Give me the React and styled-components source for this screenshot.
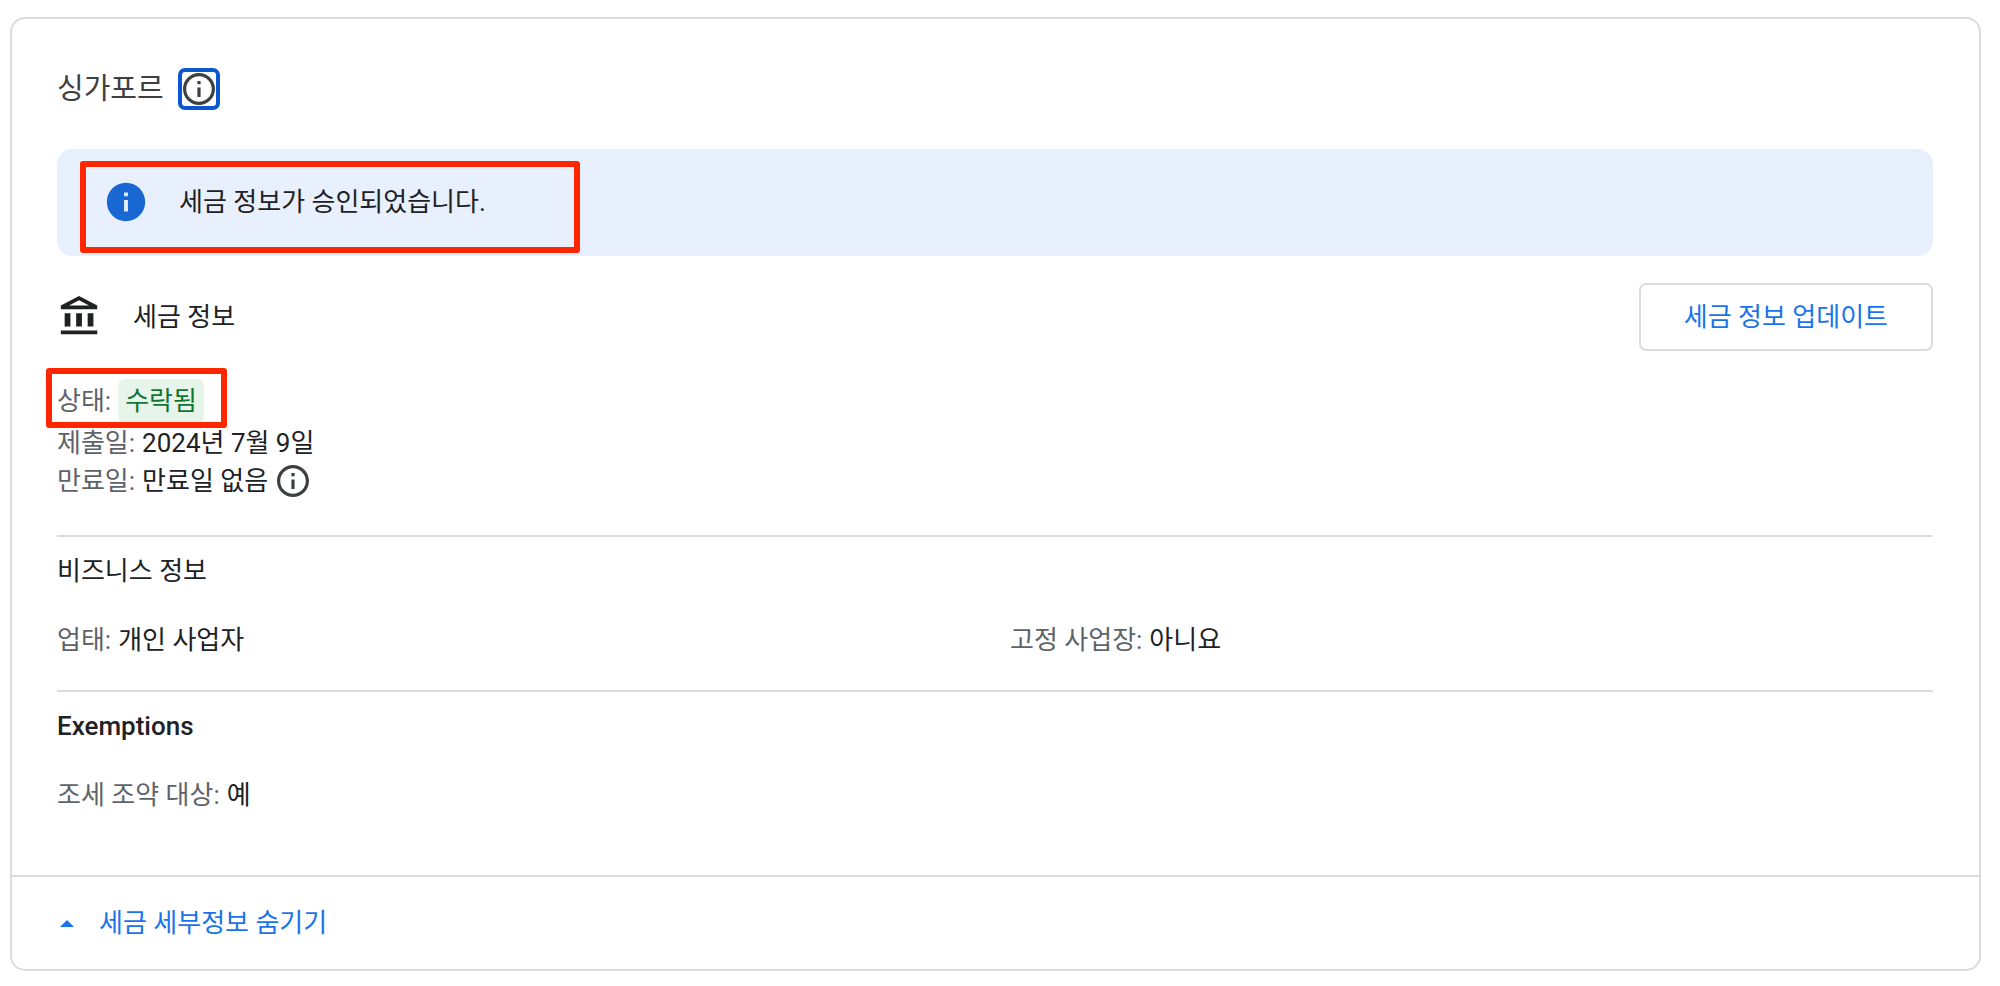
import React, { useState } from 'react';
import styled, { createGlobalStyle } from 'styled-components';

const GlobalStyle = createGlobalStyle`
  * {
    box-sizing: border-box;
  }
  body {
    margin: 0;
    background: #fff;
    color: #202124;
    font-family: Roboto, "Noto Sans CJK KR", sans-serif;
    font-size: 26px;
    line-height: 38px;
  }
  button {
    font: inherit;
    cursor: pointer;
  }
`;

const Card = styled.section`
  margin: 17px 19px 15px 10px;
  border: 2px solid #dadce0;
  border-radius: 15px;
`;

const CardBody = styled.div`
  padding: 49px 46px 0 45px;
`;

const CardHeader = styled.header`
  display: flex;
  align-items: center;
  gap: 14px;
  margin-bottom: 39px;
`;

const Country = styled.h2`
  margin: 0;
  color: #3c4043;
  font-size: 29px;
  font-weight: 400;
`;

const IconButton = styled.button`
  display: flex;
  padding: 1px;
  border: 4px solid ${({ $focused }) => ($focused ? '#0b57d0' : 'transparent')};
  border-radius: 7px;
  background: none;
  color: #3c4043;
`;

const Banner = styled.div`
  position: relative;
  display: flex;
  align-items: flex-start;
  gap: 30px;
  min-height: 107px;
  padding: 30px 46px;
  border-radius: 15px;
  background: #e8f0fe;
`;

const BannerIcon = styled.span`
  display: flex;
  color: #1967d2;
`;

const BannerText = styled.p`
  margin: 4px 0;
`;

const Highlight = styled.span`
  position: absolute;
  top: ${({ $top }) => $top}px;
  left: ${({ $left }) => $left}px;
  width: ${({ $width }) => $width}px;
  height: ${({ $height }) => $height}px;
  border: 6px solid #ff2600;
  border-radius: 3px;
  pointer-events: none;
`;

const InfoBar = styled.div`
  display: flex;
  align-items: center;
  gap: 30px;
  margin: 27px 0;
`;

const InfoTitle = styled.h3`
  flex: 1;
  margin: 0;
  font-size: 26px;
  font-weight: 400;
`;

const OutlineButton = styled.button`
  padding: 13px 43px;
  border: 2px solid #dadce0;
  border-radius: 7px;
  background: #fff;
  color: #1a73e8;
`;

const Details = styled.dl`
  margin: 0 0 35px;
`;

const Field = styled.div`
  position: relative;
  display: flex;
  align-items: center;
  gap: 7px;
  height: ${({ $tall }) => ($tall ? 46 : 38)}px;
`;

const Label = styled.dt`
  color: #5f6368;
`;

const Value = styled.dd`
  display: flex;
  align-items: center;
  gap: 4px;
  margin: 0;
`;

const Chip = styled.span`
  padding: 3px 7px;
  border-radius: 7px;
  background: #e6f4ea;
  color: #137333;
`;

const Section = styled.section`
  padding: 15px 0 31px;
  border-top: 2px solid #dadce0;
`;

const SectionTitle = styled.h3`
  margin: 0 0 31px;
  font-size: 26px;
  font-weight: ${({ $strong }) => ($strong ? 500 : 400)};
`;

const Columns = styled.dl`
  display: grid;
  grid-template-columns: 1fr 1fr;
  gap: 30px;
  margin: 0;
`;

const CardFooter = styled.footer`
  margin-top: 30px;
  padding: 27px 45px;
  border-top: 2px solid #dadce0;
`;

const ToggleButton = styled.button`
  display: flex;
  align-items: center;
  gap: 25px;
  padding: 0 3px;
  border: 0;
  background: none;
  color: #1a73e8;
`;

const InfoOutline = () => (
  <svg width="32" height="32" viewBox="2 2 20 20" fill="currentColor" aria-hidden="true">
    <path d="M11 7h2v2h-2zm0 4h2v6h-2zm1-9C6.48 2 2 6.48 2 12s4.48 10 10 10 10-4.48 10-10S17.52 2 12 2zm0 18c-4.41 0-8-3.59-8-8s3.59-8 8-8 8 3.59 8 8-3.59 8-8 8z" />
  </svg>
);

const InfoFilled = () => (
  <svg width="46" height="46" viewBox="0 0 24 24" fill="currentColor" aria-hidden="true">
    <path d="M12 2C6.48 2 2 6.48 2 12s4.48 10 10 10 10-4.48 10-10S17.52 2 12 2zm1 15h-2v-6h2v6zm0-8h-2V7h2v2z" />
  </svg>
);

const BankIcon = () => (
  <svg width="46" height="46" viewBox="0 0 24 24" fill="currentColor" aria-hidden="true">
    <path d="M4 10h3v7H4zM10 10h3v7h-3zM16 10h3v7h-3zM2 19h19v2H2zM11.5 3.26L16.71 6H6.29l5.21-2.74m0-2.26L2 6v2h19V6l-9.5-5z" />
  </svg>
);

const Caret = () => (
  <svg width="14" height="7" viewBox="0 0 14 7" fill="currentColor" aria-hidden="true">
    <path d="M0 7L7 0l7 7z" />
  </svg>
);

const Item = ({ label, children }) => (
  <Field>
    <Label>{label}:</Label>
    <Value>{children}</Value>
  </Field>
);

const App = () => {
  const [isOpen, setIsOpen] = useState(true);

  return (
    <>
      <GlobalStyle />
      <Card>
        <CardBody>
          <CardHeader>
            <Country>싱가포르</Country>
            <IconButton type="button" $focused>
              <InfoOutline />
            </IconButton>
          </CardHeader>

          <Banner role="status">
            <BannerIcon>
              <InfoFilled />
            </BannerIcon>
            <BannerText>세금 정보가 승인되었습니다.</BannerText>
            <Highlight $top={12} $left={23} $width={500} $height={92} />
          </Banner>

          <InfoBar>
            <BankIcon />
            <InfoTitle>세금 정보</InfoTitle>
            <OutlineButton type="button">세금 정보 업데이트</OutlineButton>
          </InfoBar>

          {isOpen && (
            <>
              <Details>
                <Field $tall>
                  <Label>상태:</Label>
                  <Value>
                    <Chip>수락됨</Chip>
                  </Value>
                  <Highlight $top={-10} $left={-11} $width={181} $height={60} />
                </Field>
                <Item label="제출일">2024년 7월 9일</Item>
                <Item label="만료일">
                  만료일 없음
                  <IconButton type="button">
                    <InfoOutline />
                  </IconButton>
                </Item>
              </Details>

              <Section>
                <SectionTitle>비즈니스 정보</SectionTitle>
                <Columns>
                  <Item label="업태">개인 사업자</Item>
                  <Item label="고정 사업장">아니요</Item>
                </Columns>
              </Section>

              <Section>
                <SectionTitle $strong>Exemptions</SectionTitle>
                <Columns>
                  <Item label="조세 조약 대상">예</Item>
                </Columns>
              </Section>
            </>
          )}
        </CardBody>

        <CardFooter>
          <ToggleButton type="button" aria-expanded={isOpen} onClick={() => setIsOpen(!isOpen)}>
            <Caret />
            세금 세부정보 숨기기
          </ToggleButton>
        </CardFooter>
      </Card>
    </>
  );
};

export default App;
